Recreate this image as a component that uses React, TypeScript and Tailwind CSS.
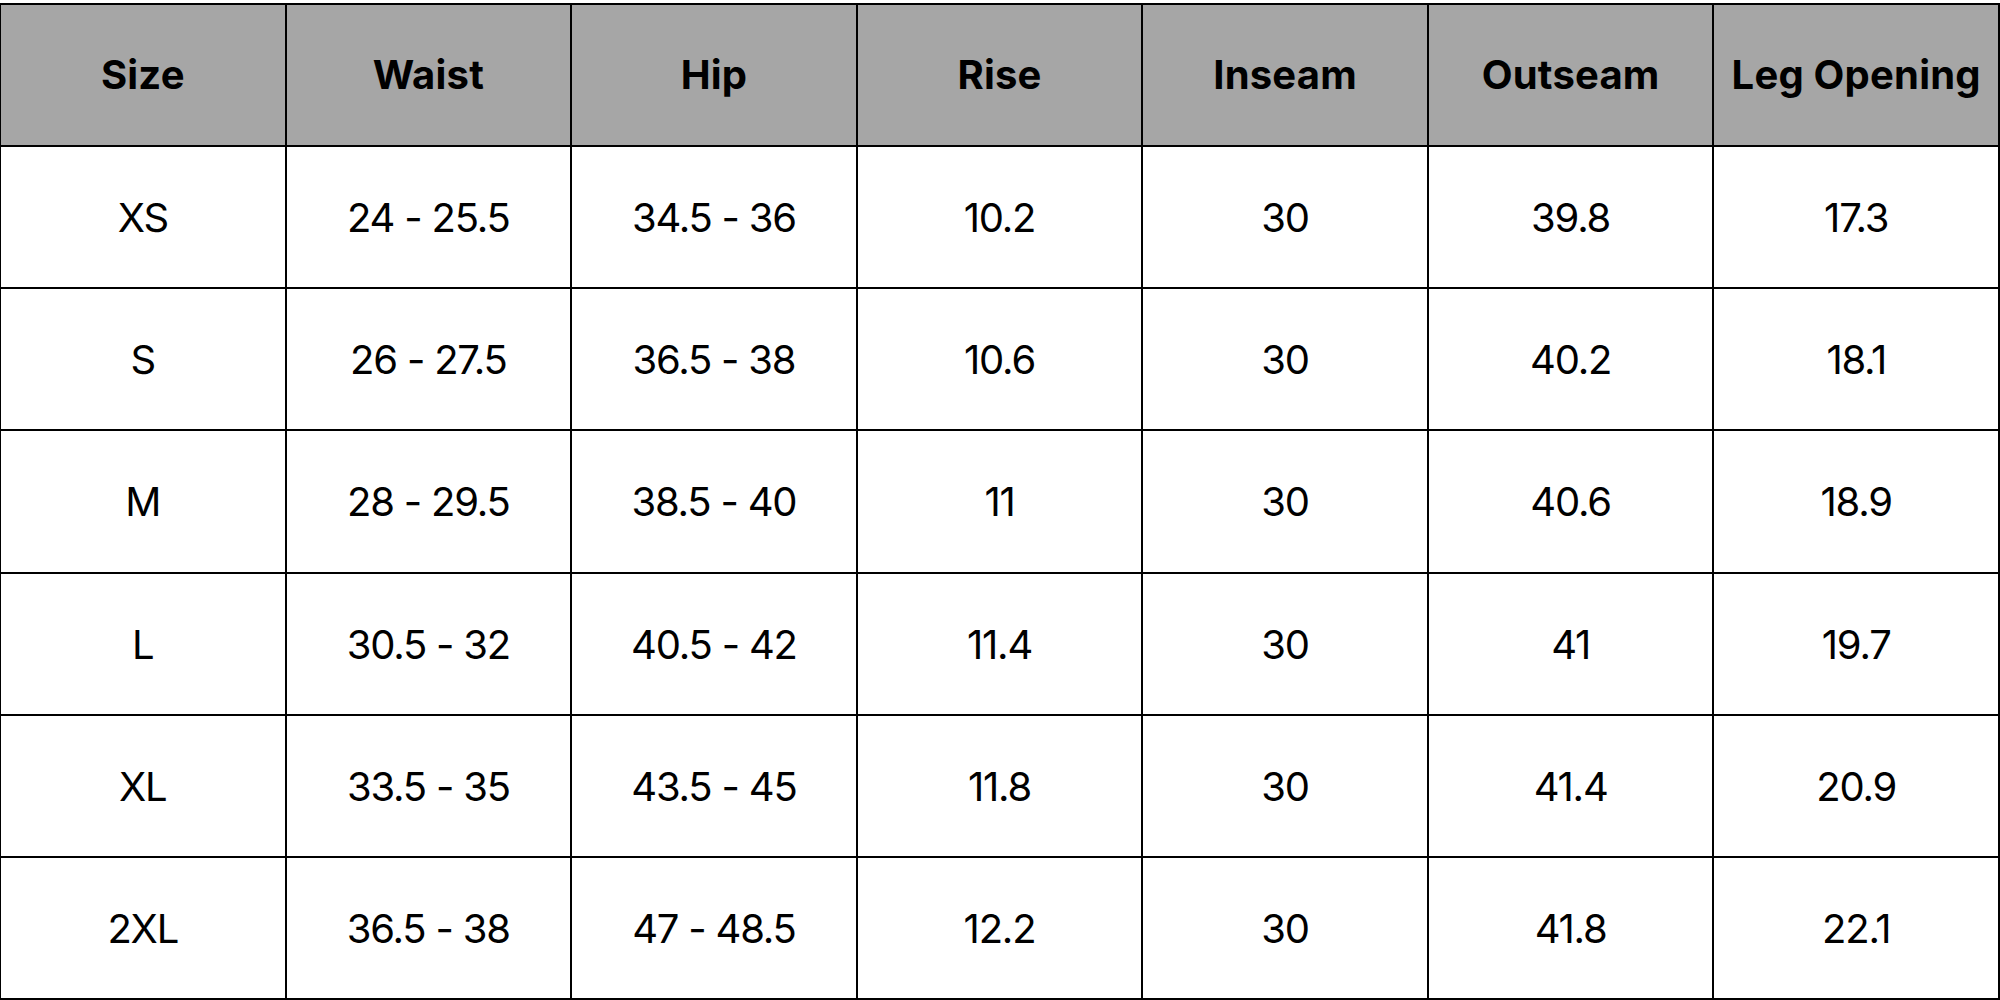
import React from "react";

const headers = ["Size", "Waist", "Hip", "Rise", "Inseam", "Outseam", "Leg Opening"];
const rows = [
  ["XS", "24 - 25.5", "34.5 - 36", "10.2", "30", "39.8", "17.3"],
  ["S", "26 - 27.5", "36.5 - 38", "10.6", "30", "40.2", "18.1"],
  ["M", "28 - 29.5", "38.5 - 40", "11", "30", "40.6", "18.9"],
  ["L", "30.5 - 32", "40.5 - 42", "11.4", "30", "41", "19.7"],
  ["XL", "33.5 - 35", "43.5 - 45", "11.8", "30", "41.4", "20.9"],
  ["2XL", "36.5 - 38", "47 - 48.5", "12.2", "30", "41.8", "22.1"],
];

export default function App() {
  return (
    <div className="w-[2000px] h-[1000px] bg-white pt-[3px] overflow-hidden" style={{ fontFamily: "Inter, 'Noto Sans', sans-serif" }}>
      <div className="h-[997px] grid grid-cols-7 grid-rows-7 border-t-2 border-l border-black text-black">
        {headers.map((h) => (
          <div key={h} className="bg-[#a6a6a6] border-r-2 border-b-2 border-black flex items-center justify-center text-[40px] font-bold tracking-[0.2px]">
            {h}
          </div>
        ))}
        {rows.map((r, i) =>
          r.map((c, j) => (
            <div key={i + "-" + j} className="bg-white border-r-2 border-b-2 border-black flex items-center justify-center text-[40px] font-normal tracking-[-1.2px] pt-[2px]">
              {c}
            </div>
          ))
        )}
      </div>
    </div>
  );
}
